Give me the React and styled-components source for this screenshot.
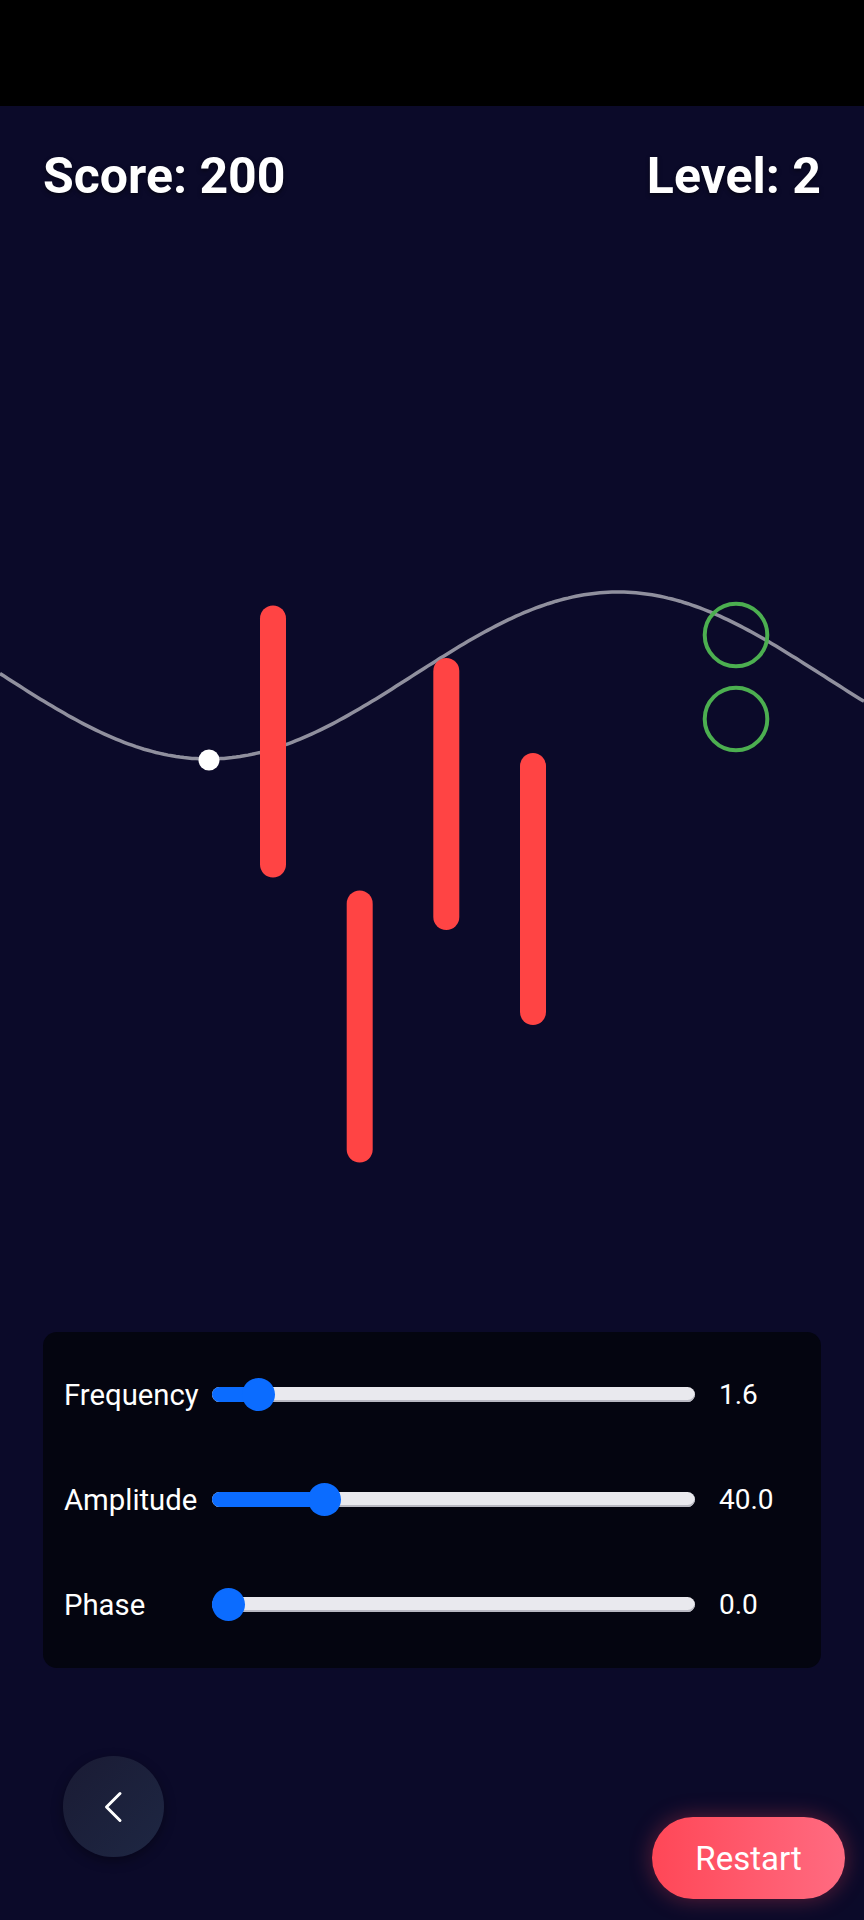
import styled, { createGlobalStyle } from "styled-components";

const GlobalStyle = createGlobalStyle`
  html, body {
    margin: 0;
    padding: 0;
    background: #0b0a29;
  }
  * {
    box-sizing: border-box;
  }
`;

// wave measured off the game field (page coordinates)
const WAVE_MID = 675.5;
const WAVE_AMP = 83.5;
const WAVE_PERIOD = 820;
const WAVE_PEAK_X = 618;

function wavePath() {
  const pts = [];
  for (let x = 0; x <= 864; x += 4) {
    const y =
      WAVE_MID - WAVE_AMP * Math.cos((2 * Math.PI * (x - WAVE_PEAK_X)) / WAVE_PERIOD);
    pts.push(`${x === 0 ? "M" : "L"}${x} ${y.toFixed(1)}`);
  }
  return pts.join(" ");
}

const walls = [
  { x: 260, y: 605.5 },
  { x: 346.7, y: 890.5 },
  { x: 433.3, y: 658 },
  { x: 520, y: 753 },
];

const targets = [
  { x: 736, y: 635 },
  { x: 736, y: 719 },
];

const sliders = [
  { label: "Frequency", value: 1.6, min: 1, max: 10, text: "1.6" },
  { label: "Amplitude", value: 40, min: 10, max: 150, text: "40.0" },
  { label: "Phase", value: 0, min: 0, max: 6.28, text: "0.0" },
];

export default function App() {
  return (
    <>
      <GlobalStyle />
      <Screen>
        <StatusBar />
        <Header>
          <Stat>Score: 200</Stat>
          <Stat>Level: 2</Stat>
        </Header>

        <Field>
          <svg width="864" height="1127" viewBox="0 205 864 1127">
            <path
              d={wavePath()}
              fill="none"
              stroke="rgba(255,255,255,0.55)"
              strokeWidth="3.5"
            />
            {walls.map((w, i) => (
              <rect key={i} x={w.x} y={w.y} width="26" height="272" rx="13" fill="#ff4444" />
            ))}
            {targets.map((t, i) => (
              <circle key={i} cx={t.x} cy={t.y} r="31.3" fill="none" stroke="#4caf50" strokeWidth="4" />
            ))}
            <circle cx="209" cy="760" r="10.5" fill="#ffffff" />
          </svg>
        </Field>

        <Panel>
          {sliders.map((s) => (
            <ControlRow key={s.label}>
              <Label>{s.label}</Label>
              <Slider frac={(s.value - s.min) / (s.max - s.min)} />
              <Value>{s.text}</Value>
            </ControlRow>
          ))}
        </Panel>

        <Footer>
          <BackButton aria-label="Back">
            <svg width="30" height="40" viewBox="0 0 30 40">
              <polyline
                points="21,6.5 7.5,20 21,33.5"
                fill="none"
                stroke="#ffffff"
                strokeWidth="3"
                strokeLinecap="round"
                strokeLinejoin="round"
              />
            </svg>
          </BackButton>
          <RestartButton>Restart</RestartButton>
        </Footer>
      </Screen>
    </>
  );
}

function Slider({ frac }) {
  const center = `calc(16px + (100% - 32px) * ${frac})`;
  return (
    <Track>
      <Fill style={{ width: center }} />
      <Thumb style={{ left: center }} />
    </Track>
  );
}

const Screen = styled.div`
  min-height: 1920px;
  display: flex;
  flex-direction: column;
  background: #0b0a29;
  font-family: Roboto, "Liberation Sans", sans-serif;
  color: #ffffff;
`;

const StatusBar = styled.div`
  height: 106px;
  background: #000000;
`;

const Header = styled.header`
  display: flex;
  justify-content: space-between;
  align-items: center;
  padding: 41px 43px 0;
`;

const Stat = styled.div`
  font-size: 50px;
  line-height: 58px;
  font-weight: 700;
  text-shadow: 0 2px 4px rgba(0, 0, 0, 0.5);
`;

const Field = styled.div`
  height: 1127px;
  overflow: hidden;

  svg {
    display: block;
  }
`;

const Panel = styled.section`
  margin: 0 43px;
  padding: 10px 20px 11px 21px;
  background: #040510;
  border-radius: 14px;
`;

const ControlRow = styled.div`
  display: flex;
  align-items: center;
  height: 105px;
`;

const Label = styled.div`
  width: 148px;
  font-size: 29.3px;
  white-space: nowrap;
`;

const Track = styled.div`
  position: relative;
  flex: 1;
  height: 15px;
  border-radius: 8px;
  background: #e9e9ee;
  box-shadow: inset 0 -2px 0 #b9b9c2;
`;

const Fill = styled.div`
  height: 100%;
  border-radius: 8px;
  background: #0b6cff;
`;

const Thumb = styled.div`
  position: absolute;
  top: 50%;
  width: 33px;
  height: 33px;
  margin: -16.5px 0 0 -16.5px;
  border-radius: 50%;
  background: #0b6cff;
`;

const Value = styled.div`
  width: 82px;
  margin-left: 24px;
  font-size: 28px;
`;

const Footer = styled.footer`
  flex: 1;
  display: flex;
  justify-content: space-between;
  align-items: flex-start;
  padding: 88px 19px 21px 63px;
`;

const BackButton = styled.button`
  width: 101px;
  height: 101px;
  border: none;
  border-radius: 50%;
  display: flex;
  align-items: center;
  justify-content: center;
  background: linear-gradient(135deg, #1a1b34, #1e2743);
  box-shadow: 0 4px 12px rgba(0, 0, 0, 0.35);
  padding: 0;
`;

const RestartButton = styled.button`
  align-self: flex-end;
  width: 193px;
  height: 82px;
  border: none;
  border-radius: 41px;
  background: linear-gradient(90deg, #ff4757, #ff6b81);
  box-shadow: 0 0 22px rgba(255, 71, 87, 0.35);
  color: #ffffff;
  font-family: Roboto, "Liberation Sans", sans-serif;
  font-size: 33px;
  padding: 0;
`;
